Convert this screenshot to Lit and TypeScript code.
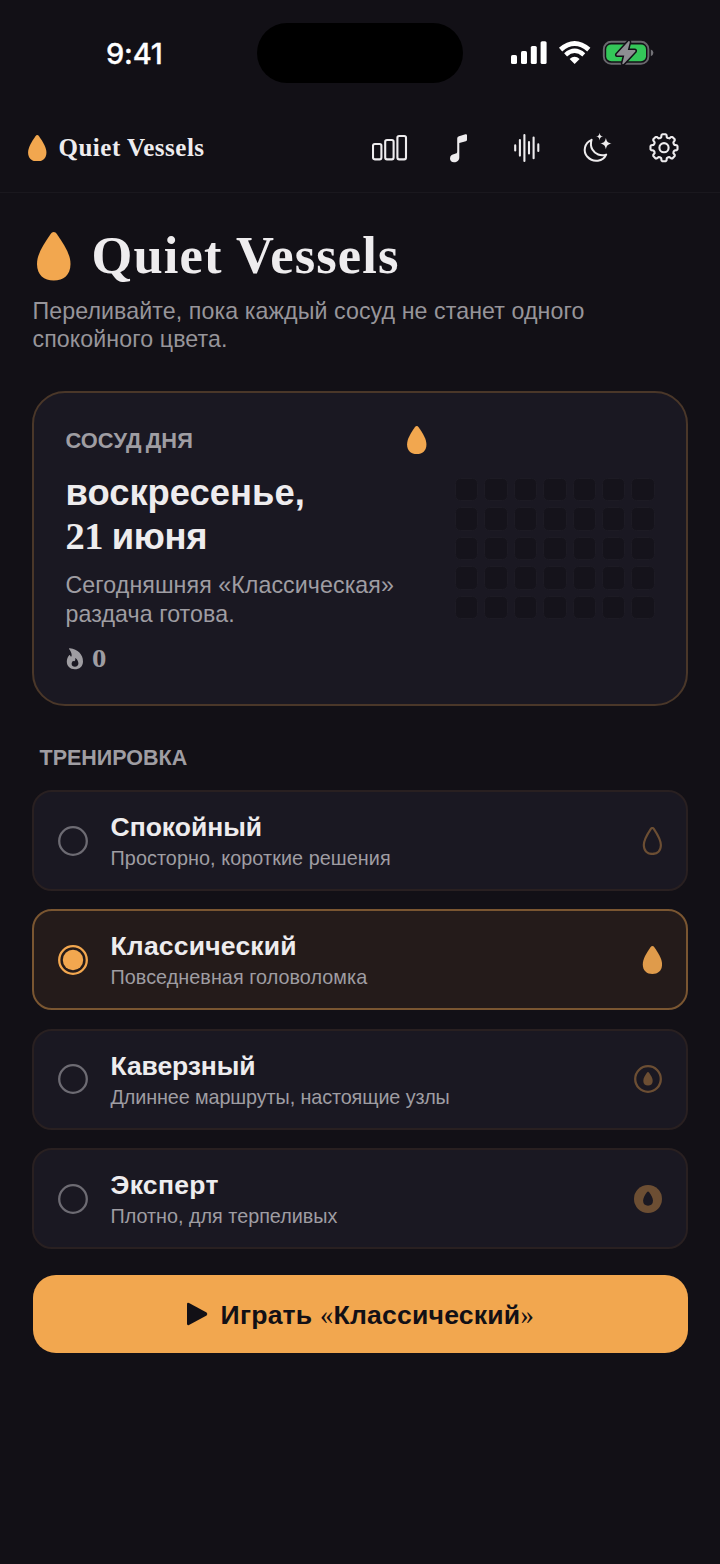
import { LitElement, html, svg, css } from "lit";
import { customElement, property, state } from "lit/decorators.js";
import { classMap } from "lit/directives/class-map.js";

const DROP =
  "M16.75 0C18 0 19 .8 20 2.200C27.500 13 33.500 22.500 33.500 32C33.500 43 26.500 48.500 16.750 48.500C7 48.500 0 43 0 32C0 22.500 6 13 13.500 2.200C14.500 .8 15.500 0 16.750 0Z";

function gearPath(teeth: number, outer: number, inner: number): string {
  const pts: string[] = [];
  const step = (Math.PI * 2) / teeth;
  for (let i = 0; i < teeth; i++) {
    const a = i * step - Math.PI / 2;
    for (const [r, d] of [
      [inner, -0.265],
      [outer - 0.6, -0.19],
      [outer, -0.12],
      [outer, 0.12],
      [outer - 0.6, 0.19],
      [inner, 0.265],
      [inner - 0.4, 0.39],
    ]) {
      pts.push(`${(16 + r * Math.cos(a + d)).toFixed(2)} ${(16 + r * Math.sin(a + d)).toFixed(2)}`);
    }
  }
  return `M${pts.join("L")}Z`;
}

@customElement("drop-icon")
export class DropIcon extends LitElement {
  static styles = css`
    :host { display: block; color: #f2a74f; }
    svg { display: block; width: 100%; height: 100%; }
  `;
  render() {
    return html`<svg viewBox="0 0 33.5 48.5"><path d=${DROP} fill="currentColor" /></svg>`;
  }
}

@customElement("status-bar")
export class StatusBar extends LitElement {
  static styles = css`
    :host { display: grid; grid-template-columns: 257px 206px 257px; height: 104px; }
    .time {
      padding: 36px 0 0 106px;
      font: 500 29px/35px Inter, sans-serif;
      letter-spacing: -0.2px;
      -webkit-text-stroke: 0.3px #fff;
      color: #fff;
    }
    .island { height: 60px; margin-top: 23px; border-radius: 30px; background: #000; }
    .signals { display: flex; align-items: flex-start; padding: 40px 0 0 47px; }
    svg { display: block; }
  `;
  render() {
    return html`
      <div class="time">9:41</div>
      <div class="island"></div>
      <div class="signals">
        <svg width="146" height="26" viewBox="510 40 146 26">
          <g fill="#fff">
            <rect x="511" y="55" width="6" height="9" rx="1.6" />
            <rect x="521" y="51" width="6" height="13" rx="1.6" />
            <rect x="530.8" y="46" width="6" height="18" rx="1.6" />
            <rect x="540.6" y="41.2" width="6" height="22.8" rx="1.6" />
            <path d="M574.6 64L569.6 59Q574.6 54.600 579.600 59Z" />
          </g>
          <g fill="none" stroke="#fff">
            <path d="M560.6 49.6Q574.6 37.400 588.8 49.6" stroke-width="4.9" />
            <path d="M565.6 54.8Q574.6 46.8 583.8 54.8" stroke-width="4.4" />
          </g>
          <rect x="603.8" y="41.8" width="44.6" height="22" rx="7.4" fill="none" stroke="#69686d" stroke-width="1.9" />
          <path d="M650.8 49.4Q653.4 50.4 653.4 52.8T650.8 56.2Z" fill="#727176" />
          <rect x="606.2" y="44.4" width="39.8" height="16.8" rx="5" fill="#34c759" />
          <path
            d="M628.7 41L616.6 54.2Q616.1 55.4 617.2 55.6H624.3L622.3 63.4Q622.6 64.8 623.8 63.8L635.4 51.4Q635.9 50.2 634.8 50H627.8L629.8 42.2Q629.8 40.8 628.7 41Z"
            fill="#8e8e93" stroke="#121016" stroke-width="3" paint-order="stroke"
          />
        </svg>
      </div>
    `;
  }
}

@customElement("top-bar")
export class TopBar extends LitElement {
  static styles = css`
    :host {
      display: flex;
      align-items: center;
      box-sizing: border-box;
      height: 89px;
      padding: 0 40px 0 28px;
      border-bottom: 1px solid #1a181e;
    }
    .mark { width: 18.5px; height: 26.5px; }
    .name {
      flex: 1;
      margin-left: 12px;
      font: 700 25px/30px "Liberation Serif", serif;
      letter-spacing: 0.5px;
      color: #eeecee;
    }
    svg { display: block; width: 308px; height: 32px; }
  `;
  render() {
    return html`
      <drop-icon class="mark"></drop-icon>
      <div class="name">Quiet Vessels</div>
      <svg viewBox="372 132 308 32">
        <g fill="none" stroke="#eeecee" stroke-width="2.1" stroke-linejoin="round" stroke-linecap="round">
          <rect x="373" y="144" width="8.4" height="15.4" rx="1.8" />
          <rect x="385.2" y="140" width="8.4" height="19.4" rx="1.8" />
          <rect x="397.4" y="136" width="8.6" height="23.4" rx="1.8" />
          <path d="M515.2 145.400V150.400M519.9 140V155.6M524.4 135V161M529 142V153.4M533.6 137.6V158.2M538.3 144.4V151" />
          <path d="M591.6 139.8C584.400 142.800 582.6 151.4 587.4 156.800C593.4 163.2 603.2 161.400 606.2 154.6C600.6 156.4 595 154.2 592.4 149.6C590.6 146.4 590.6 142.8 591.6 139.8Z" stroke-width="2" />
          <g transform="translate(648 131.7)">
            <path d=${gearPath(8, 13.6, 10.8)} />
            <circle cx="16" cy="16" r="4.6" />
          </g>
        </g>
        <g fill="#eeecee">
          <path d="M457.2 138.400Q457.2 136.600 459 136.200L465.400 134.300Q467 133.900 467 135.300V139.800Q467 141 465.800 141.300L459.300 143V157.4C459.3 160.4 457 162.2 454 162.2C451.6 162.2 450 160.6 450 158.4C450 155.6 452.2 154.4 454.4 154C456.6 153.6 457.2 153.4 457.2 151.6Z" />
          <path d="M599.6 132.800C600 135.600 600.8 136.200 603.200 136.600C600.8 137 600 137.600 599.6 140.400C599.2 137.600 598.4 137 596 136.600C598.4 136.200 599.2 135.600 599.6 132.800Z" />
          <path d="M605.9 138C606.9 142 607.700 142.600 611.600 143.600C607.700 144.600 606.9 145.2 605.9 149.2C604.9 145.2 604.1 144.600 600.200 143.600C604.1 142.600 604.9 142 605.9 138Z" />
        </g>
      </svg>
    `;
  }
}

@customElement("daily-card")
export class DailyCard extends LitElement {
  static styles = css`
    :host {
      display: grid;
      grid-template-columns: 361px 200px;
      column-gap: 28.5px;
      align-items: center;
      box-sizing: border-box;
      height: 314.5px;
      padding: 0 31px 0 31.500px;
      border: 2px solid #4a3729;
      border-radius: 33px;
      background: #1a1822;
      font-family: "Liberation Sans", sans-serif;
    }
    .info { align-self: start; padding-top: 32px; }
    .head { display: flex; justify-content: space-between; align-items: center; height: 30px; }
    .label { padding-top: 1px; font-weight: 700; font-size: 21.8px; line-height: 29px; letter-spacing: 0.1px; word-spacing: -2px; color: #9f9da2; }
    .mark { width: 19.5px; height: 28px; }
    .date { margin-top: 15.500px; font-size: 36.4px; line-height: 44.8px; font-weight: 700; color: #eeecee; }
    .num { font-family: "Liberation Serif", serif; font-size: 38.500px; letter-spacing: -0.5px; line-height: 1px; }
    .month { margin-left: -1.5px; letter-spacing: -0.3px; }
    .note { margin-top: 11px; font-size: 23.2px; line-height: 28.5px; letter-spacing: 0.08px; color: #9f9da2; }
    .streak {
      display: flex;
      align-items: center;
      gap: 8px;
      height: 30px;
      margin-top: 15.5px;
      padding-left: 0.5px;
      font: 700 25px/30px "Liberation Serif", serif;
      color: #9f9da2;
    }
    .streak svg { display: block; width: 18px; height: 22px; }
    .zero { padding-top: 1px; transform: scaleX(1.15); transform-origin: left; }
    .calendar { display: grid; grid-template-columns: repeat(7, 23.4px); gap: 6px; }
    .day { box-sizing: border-box; height: 23.4px; border: 1px solid #1d1b24; border-radius: 5.5px; background: #15131b; }
  `;
  render() {
    return html`
      <div class="info">
        <div class="head">
          <div class="label">СОСУД ДНЯ</div>
          <drop-icon class="mark"></drop-icon>
        </div>
        <div class="date">воскресенье,<br /><span class="num">21</span> <span class="month">июня</span></div>
        <div class="note">Сегодняшняя «Классическая»<br />раздача готова.</div>
        <div class="streak">
          <svg viewBox="0 0 18 22">
            <path fill-rule="evenodd" fill="#9f9da2" d="M3 .9C2.8.3 3.3.1 3.9.3C11.8 1 17 6.600 17 13.400C17 18.300 13.400 21.300 8.800 21.300C4 21.300.8 18.200.8 13.600C.8 10.800 1.800 8.600 3.200 7.200C3.700 6.800 4.100 7 4.200 7.600C4.300 8.400 4.700 8.700 5.300 8.500C6.300 7.800 5.500 3.700 3 .9ZM9.300 10.300C9.600 12.200 8.800 13.600 7.900 13.300C7.300 13 7 12.900 6.500 13.400C5.800 14.200 5.600 15.100 5.600 16C5.800 17.800 7 18.800 8.900 18.800C11 18.800 12.400 17.500 12.400 15.600C12.400 13.500 11.400 11.500 9.700 10.200C9.400 10 9.300 10.100 9.300 10.300Z" />
          </svg>
          <span class="zero">0</span>
        </div>
      </div>
      <div class="calendar">${Array.from({ length: 35 }, () => html`<div class="day"></div>`)}</div>
    `;
  }
}

type Level = { id: string; title: string; hint: string };

@customElement("level-row")
export class LevelRow extends LitElement {
  @property({ attribute: false }) level!: Level;
  @property({ type: Boolean, reflect: true }) selected = false;

  static styles = css`
    :host {
      display: flex;
      align-items: center;
      box-sizing: border-box;
      height: 101px;
      padding: 0 24px 0 24px;
      border: 2px solid #292021;
      border-radius: 20px;
      background: #1a1822;
      color: #6c4e33;
      cursor: pointer;
    }
    :host([selected]) { background: #241b1a; border-color: #7a5631; color: #df9b4b; }
    svg { display: block; flex: none; }
    .text { flex: 1; padding: 2px 0 0 22.500px; font-family: "Liberation Sans", sans-serif; }
    .title { font-size: 26.5px; line-height: 33px; font-weight: 700; color: #eeecee; }
    .hint { font-size: 19.8px; line-height: 28px; color: #9f9da2; }
    .title.calm { letter-spacing: 0; }
    .title.classic { letter-spacing: 0.2px; }
    .title.tricky { letter-spacing: -0.1px; }
    .title.expert { letter-spacing: 0.3px; }
    .hint.calm { letter-spacing: 0.08px; }
    .hint.classic { letter-spacing: 0.05px; }
    .hint.tricky { letter-spacing: -0.1px; }
    .hint.expert { letter-spacing: 0; }
  `;

  private badge() {
    const drop = (x: number, y: number, s: number, fill = "currentColor") =>
      svg`<path d=${DROP} transform="translate(${x} ${y}) scale(${s})" fill=${fill} />`;
    switch (this.level.id) {
      case "calm":
        return svg`<path d=${DROP} transform="translate(9.800 1) scale(.510 .535)" fill="none" stroke="currentColor" stroke-width="4.200" />`;
      case "classic":
        return drop(8.8, 0, 0.575);
      case "tricky":
        return svg`<circle cx="14" cy="14" r="12.800" fill="none" stroke="currentColor" stroke-width="2.300" />${drop(9.3, 7, 0.28)}`;
      default:
        return svg`<circle cx="14" cy="14" r="14" fill="currentColor" />${drop(9.1, 6.4, 0.295, "#1a1822")}`;
    }
  }

  render() {
    const kind = this.level.id;
    return html`
      <svg width="30" height="30" viewBox="0 0 30 30">
        <circle cx="15" cy="15" r="13.800" fill="none" stroke=${this.selected ? "#f2a74f" : "#6d6b73"} stroke-width="2.300" />
        ${this.selected ? svg`<circle cx="15" cy="15" r="10.200" fill="#f2a74f" />` : null}
      </svg>
      <div class="text">
        <div class=${classMap({ title: true, [kind]: true })}>${this.level.title}</div>
        <div class=${classMap({ hint: true, [kind]: true })}>${this.level.hint}</div>
      </div>
      <svg width="28" height="28" viewBox="0 0 28 28">${this.badge()}</svg>
    `;
  }
}

@customElement("app-root")
export class AppRoot extends LitElement {
  @state() private current = "classic";

  private levels: Level[] = [
    { id: "calm", title: "Спокойный", hint: "Просторно, короткие решения" },
    { id: "classic", title: "Классический", hint: "Повседневная головоломка" },
    { id: "tricky", title: "Каверзный", hint: "Длиннее маршруты, настоящие узлы" },
    { id: "expert", title: "Эксперт", hint: "Плотно, для терпеливых" },
  ];

  static styles = css`
    :host {
      display: block;
      width: 720px;
      height: 1564px;
      overflow: hidden;
      background: #121016;
      font-family: "Liberation Sans", sans-serif;
    }
    main { display: flex; flex-direction: column; padding: 39px 32px 0; }
    .hero { display: flex; align-items: flex-start; gap: 21px; height: 56px; padding-left: 5px; }
    .mark { width: 33.5px; height: 48.5px; }
    h1 {
      margin: -7px 0 0;
      font: 700 52.500px/60px "Liberation Serif", serif;
      letter-spacing: 1.150px;
      color: #eeecee;
    }
    .lead { margin: 8.500px 0 0 0.5px; font-size: 23.2px; line-height: 28.6px; letter-spacing: 0.09px; color: #97959a; }
    daily-card { margin-top: 37.500px; }
    h2 {
      margin: 37px 0 0;
      padding-left: 7.5px;
      font-size: 21.5px;
      line-height: 30px;
      font-weight: 700;
      color: #9f9da2;
    }
    .levels { display: flex; flex-direction: column; gap: 18.300px; margin-top: 17.500px; }
    .play {
      display: flex;
      align-items: center;
      justify-content: center;
      gap: 12.5px;
      height: 78.5px;
      margin: 25.500px 0.5px 0;
      padding: 2px 0 0;
      border: 0;
      border-radius: 23px;
      background: #f2a74f;
      color: #121016;
      font: 700 26.6px/32px "Liberation Sans", sans-serif;
      letter-spacing: 0.2px;
    }
    .play svg { display: block; margin-top: -1px; }
    .quote { font-weight: 400; font-family: "Liberation Serif", serif; }
  `;

  render() {
    return html`
      <status-bar></status-bar>
      <top-bar></top-bar>
      <main>
        <div class="hero">
          <drop-icon class="mark"></drop-icon>
          <h1>Quiet Vessels</h1>
        </div>
        <p class="lead">Переливайте, пока каждый сосуд не станет одного<br />спокойного цвета.</p>
        <daily-card></daily-card>
        <h2>ТРЕНИРОВКА</h2>
        <div class="levels">
          ${this.levels.map(
            (l) => html`<level-row
              .level=${l}
              ?selected=${l.id === this.current}
              @click=${() => (this.current = l.id)}
            ></level-row>`
          )}
        </div>
        <button class="play">
          <svg width="22" height="24" viewBox="0 0 22 24"><path d="M1 2.200Q1 .2 3 .9L20.600 10.600Q22 12 20.600 13.400L3 23.100Q1 23.800 1 21.800Z" fill="#121016" /></svg>
          <span>Играть <span class="quote">«</span>Классический<span class="quote">»</span></span>
        </button>
      </main>
    `;
  }
}
